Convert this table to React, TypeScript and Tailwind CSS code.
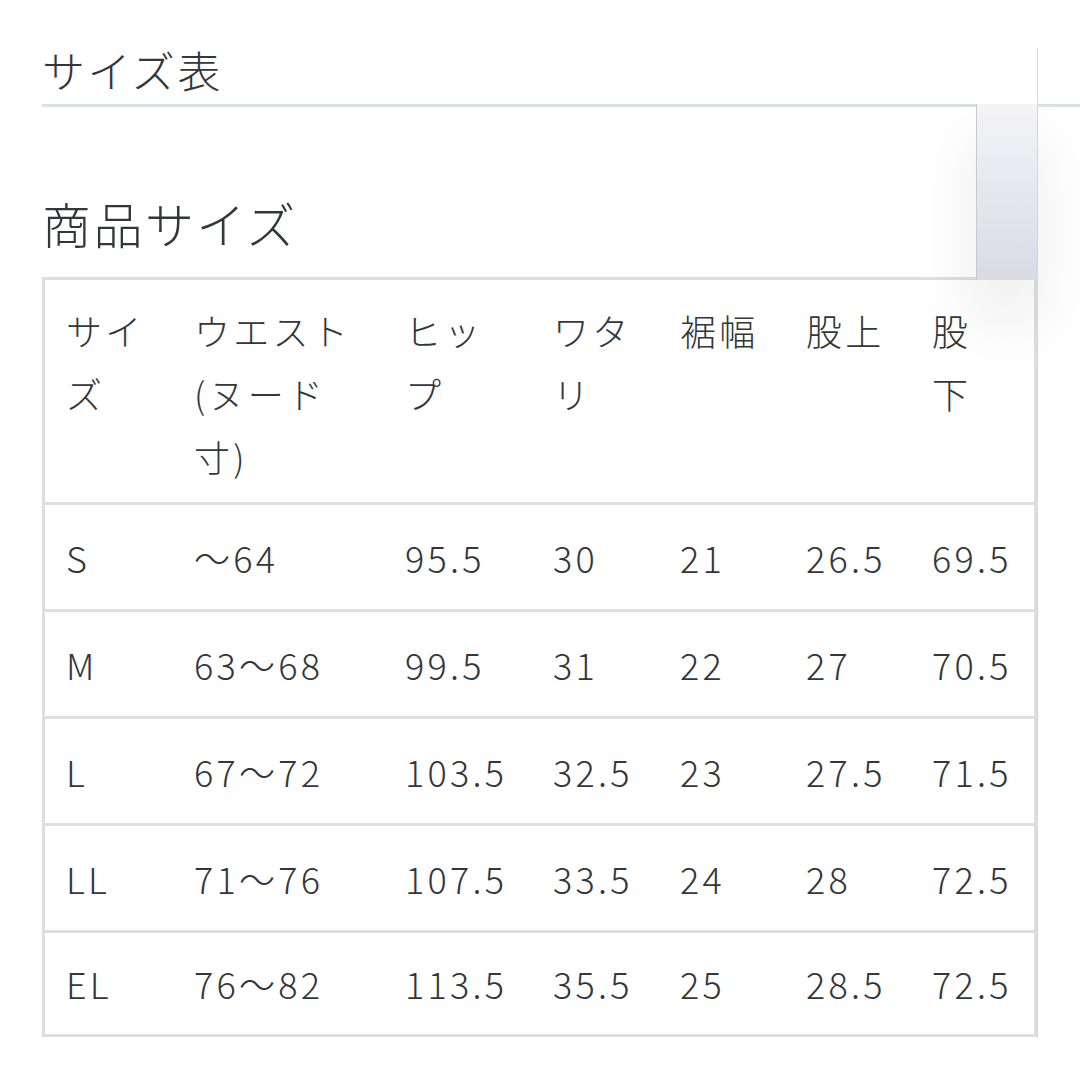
import React from 'react';

const headers: string[][] = [
  ['サイ', 'ズ'],
  ['ウエスト', '(ヌード', '寸)'],
  ['ヒッ', 'プ'],
  ['ワタ', 'リ'],
  ['裾幅'],
  ['股上'],
  ['股', '下'],
];

const rows: string[][] = [
  ['S', '～64', '95.5', '30', '21', '26.5', '69.5'],
  ['M', '63～68', '99.5', '31', '22', '27', '70.5'],
  ['L', '67～72', '103.5', '32.5', '23', '27.5', '71.5'],
  ['LL', '71～76', '107.5', '33.5', '24', '28', '72.5'],
  ['EL', '76～82', '113.5', '35.5', '25', '28.5', '72.5'],
];

const colWidths = ['w-[128px]', 'w-[211px]', 'w-[148px]', 'w-[127px]', 'w-[126px]', 'w-[126px]', 'w-[126px]'];

const App = () => {
  return (
    <div
      className="relative w-[1080px] h-[1080px] overflow-hidden bg-white text-[#33363a]"
      style={{ fontFamily: '"Noto Sans CJK JP", "Noto Sans", sans-serif' }}
    >
      <div className="pl-[42px] pt-[36px]">
        <h2 className="text-[43px] font-light leading-[66px] tracking-[0.06em]">サイズ表</h2>
        <div className="h-[3px] bg-[#dde0e0] mt-[2px]" />

        <h3 className="mt-[84px] text-[49px] font-light leading-[64px] tracking-[0.05em]">商品サイズ</h3>

        {/* table is clipped on the right like a horizontal scroller */}
        <div className="mt-[22px] w-[995px] overflow-hidden border-[3px] border-[#dedede]">
          <table className="table-fixed border-collapse w-[1100px] text-[36px] font-light tracking-[0.09em]">
            <colgroup>
              {colWidths.map((w, i) => (
                <col key={i} className={w} />
              ))}
              <col />
            </colgroup>
            <thead>
              <tr className="border-b-[3px] border-[#dedede]">
                {headers.map((lines, i) => (
                  <th key={i} className="text-left align-top font-light pl-[21px] pt-[19px] pb-[14px] leading-[63px]">
                    {lines.map((l, j) => (
                      <div key={j} className="whitespace-nowrap">{l}</div>
                    ))}
                  </th>
                ))}
                <th />
              </tr>
            </thead>
            <tbody>
              {rows.map((r, i) => {
                const last = i === rows.length - 1;
                return (
                  <tr key={i} className={last ? '' : 'border-b-[3px] border-[#dedede]'}>
                    {r.map((c, j) => (
                      <td
                        key={j}
                        className={`pl-[21px] leading-[40px] whitespace-nowrap ${last ? 'h-[102px]' : 'h-[107px]'}`}
                      >
                        {c}
                      </td>
                    ))}
                    <td />
                  </tr>
                );
              })}
            </tbody>
          </table>
        </div>
      </div>

      {/* floating scroll hint over the right edge */}
      <div className="absolute left-[976px] top-[104px] w-[61px] h-[176px] bg-gradient-to-b from-[#f4f4f7] via-[#e6e7ee] to-[#d9dae4] border-l border-[#c7c8d0] shadow-[0_40px_60px_10px_rgba(0,0,0,0.06)]" />
      <div className="absolute left-[1037px] top-[48px] w-[1px] h-[990px] bg-[#d6d6d6]" />
      <div className="absolute left-[1037px] top-[104px] w-[43px] h-[3px] bg-[#dde0e0]" />
    </div>
  );
};

export default App;
